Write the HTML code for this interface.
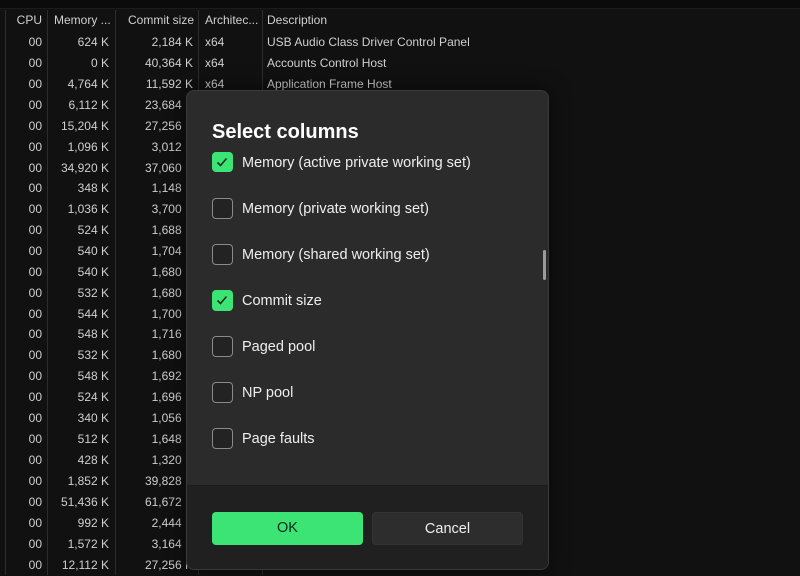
<!DOCTYPE html>
<html><head><meta charset="utf-8"><style>
*{margin:0;padding:0;box-sizing:border-box}
body{width:800px;height:575px;overflow:hidden;background:#111;font-family:"Liberation Sans",sans-serif;color:#cfcfcf;font-size:12px;position:relative}
.top{position:absolute;left:0;top:0;width:800px;height:9px;background:#0b0b0b;border-bottom:1px solid #1c1c1c}
.vl{position:absolute;top:10px;bottom:0;width:1px;background:#2c2c2c}
.row{position:absolute;left:0;width:800px;height:21px;line-height:21px}
.row span{position:absolute;white-space:nowrap}
.c{right:758px}.m{right:691px}.k{right:607px}.a{left:205px}.d{left:267px}
.hd span{color:#d0d0d0}
.dlg{position:absolute;left:186px;top:90px;width:363px;height:480px;background:#2b2b2b;border:1px solid #3a3a3a;border-radius:8px;overflow:hidden;box-shadow:0 0 20px rgba(0,0,0,.6)}
.ttl{position:absolute;left:25px;top:30px;font-size:20px;font-weight:bold;color:#fff}
.it{position:absolute;left:25px;height:22px;line-height:22px;font-size:14.5px;color:#eee}
.cb{position:absolute;left:0;top:0;width:21px;height:21px;border:1.5px solid #8a8a8a;border-radius:4px;background:#232323}
.cb.on{background:#3be475;border-color:#3be475}
.it .t{position:absolute;left:30px;top:0;white-space:nowrap}
.foot{position:absolute;left:0;top:394px;width:100%;height:86px;background:#202020;border-top:1px solid #1c1c1c}
.btn{position:absolute;top:26px;width:151px;height:33px;border-radius:4px;text-align:center;line-height:33px;font-size:14.5px}
.ok{left:25px;background:#3be475;color:#0f2a18}
.cn{left:185px;background:#2d2d2d;color:#eee;border:1px solid #333}
.sb{position:absolute;left:356px;top:159px;width:3px;height:30px;background:#9a9a9a;border-radius:2px}
</style></head><body>
<div class="top"></div>
<div class="vl" style="left:5px"></div>
<div class="vl" style="left:47px"></div>
<div class="vl" style="left:115px"></div>
<div class="vl" style="left:198px"></div>
<div class="vl" style="left:262px"></div>

<div class="row hd" style="top:10px"><span class="c">CPU</span><span style="left:54px">Memory ...</span><span class="k" style="right:606px">Commit size</span><span class="a">Architec...</span><span class="d">Description</span></div>

<div class="row" style="top:32px"><span class="c">00</span><span class="m">624 K</span><span class="k">2,184 K</span><span class="a">x64</span><span class="d">USB Audio Class Driver Control Panel</span></div>
<div class="row" style="top:53px"><span class="c">00</span><span class="m">0 K</span><span class="k">40,364 K</span><span class="a">x64</span><span class="d">Accounts Control Host</span></div>
<div class="row" style="top:74px"><span class="c">00</span><span class="m">4,764 K</span><span class="k">11,592 K</span><span class="a">x64</span><span class="d">Application Frame Host</span></div>
<div class="row" style="top:95px"><span class="c">00</span><span class="m">6,112 K</span><span class="k">23,684 K</span></div>
<div class="row" style="top:116px"><span class="c">00</span><span class="m">15,204 K</span><span class="k">27,256 K</span></div>
<div class="row" style="top:137px"><span class="c">00</span><span class="m">1,096 K</span><span class="k">3,012 K</span></div>
<div class="row" style="top:158px"><span class="c">00</span><span class="m">34,920 K</span><span class="k">37,060 K</span></div>
<div class="row" style="top:178px"><span class="c">00</span><span class="m">348 K</span><span class="k">1,148 K</span></div>
<div class="row" style="top:199px"><span class="c">00</span><span class="m">1,036 K</span><span class="k">3,700 K</span></div>
<div class="row" style="top:220px"><span class="c">00</span><span class="m">524 K</span><span class="k">1,688 K</span></div>
<div class="row" style="top:241px"><span class="c">00</span><span class="m">540 K</span><span class="k">1,704 K</span></div>
<div class="row" style="top:262px"><span class="c">00</span><span class="m">540 K</span><span class="k">1,680 K</span></div>
<div class="row" style="top:283px"><span class="c">00</span><span class="m">532 K</span><span class="k">1,680 K</span></div>
<div class="row" style="top:304px"><span class="c">00</span><span class="m">544 K</span><span class="k">1,700 K</span></div>
<div class="row" style="top:324px"><span class="c">00</span><span class="m">548 K</span><span class="k">1,716 K</span></div>
<div class="row" style="top:345px"><span class="c">00</span><span class="m">532 K</span><span class="k">1,680 K</span></div>
<div class="row" style="top:366px"><span class="c">00</span><span class="m">548 K</span><span class="k">1,692 K</span></div>
<div class="row" style="top:387px"><span class="c">00</span><span class="m">524 K</span><span class="k">1,696 K</span></div>
<div class="row" style="top:408px"><span class="c">00</span><span class="m">340 K</span><span class="k">1,056 K</span></div>
<div class="row" style="top:429px"><span class="c">00</span><span class="m">512 K</span><span class="k">1,648 K</span></div>
<div class="row" style="top:450px"><span class="c">00</span><span class="m">428 K</span><span class="k">1,320 K</span></div>
<div class="row" style="top:471px"><span class="c">00</span><span class="m">1,852 K</span><span class="k">39,828 K</span></div>
<div class="row" style="top:492px"><span class="c">00</span><span class="m">51,436 K</span><span class="k">61,672 K</span></div>
<div class="row" style="top:513px"><span class="c">00</span><span class="m">992 K</span><span class="k">2,444 K</span></div>
<div class="row" style="top:534px"><span class="c">00</span><span class="m">1,572 K</span><span class="k">3,164 K</span></div>
<div class="row" style="top:555px"><span class="c">00</span><span class="m">12,112 K</span><span class="k">27,256 K</span></div>

<div class="dlg">
  <div class="ttl">Select columns</div>
  <div class="it" style="top:61px"><div class="cb on" style="top:0;height:20px"><svg width="18" height="18" viewBox="0 0 18 18" style="position:absolute;left:0;top:0"><path d="M4.5 9.5 L7.5 12.5 L13.5 5.5" fill="none" stroke="#10301c" stroke-width="1.6"/></svg></div><span class="t">Memory (active private working set)</span></div>
  <div class="it" style="top:107px"><div class="cb"></div><span class="t">Memory (private working set)</span></div>
  <div class="it" style="top:153px"><div class="cb"></div><span class="t">Memory (shared working set)</span></div>
  <div class="it" style="top:199px"><div class="cb on"><svg width="18" height="18" viewBox="0 0 18 18" style="position:absolute;left:0;top:0"><path d="M4.5 9.5 L7.5 12.5 L13.5 5.5" fill="none" stroke="#10301c" stroke-width="1.6"/></svg></div><span class="t">Commit size</span></div>
  <div class="it" style="top:245px"><div class="cb"></div><span class="t">Paged pool</span></div>
  <div class="it" style="top:291px"><div class="cb"></div><span class="t">NP pool</span></div>
  <div class="it" style="top:337px"><div class="cb"></div><span class="t">Page faults</span></div>
  <div class="sb"></div>
  <div class="foot">
    <div class="btn ok">OK</div>
    <div class="btn cn">Cancel</div>
  </div>
</div>
</body></html>
